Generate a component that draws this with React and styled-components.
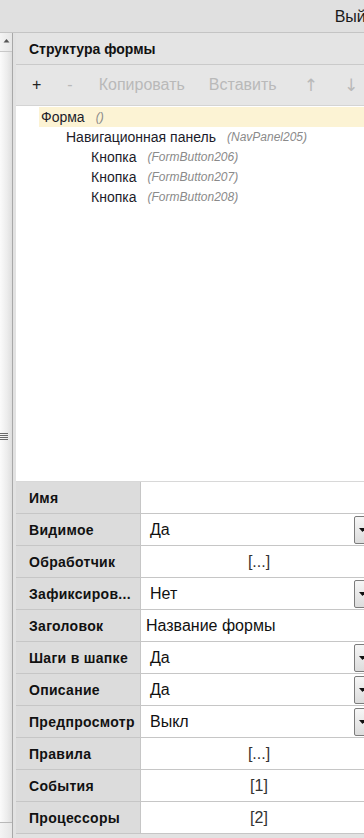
import React from "react";
import styled, { createGlobalStyle } from "styled-components";

const GlobalStyle = createGlobalStyle`
  html, body {
    margin: 0;
    padding: 0;
    overflow: hidden;
    background: #e2e2e2;
  }
  body {
    font-family: "Liberation Sans", Arial, sans-serif;
  }
`;

const treeItems = [
  { level: 0, name: "Форма", id: "()", selected: true },
  { level: 1, name: "Навигационная панель", id: "(NavPanel205)" },
  { level: 2, name: "Кнопка", id: "(FormButton206)" },
  { level: 2, name: "Кнопка", id: "(FormButton207)" },
  { level: 2, name: "Кнопка", id: "(FormButton208)" },
];

// label of the 4th row is shown shortened, as the editor does it
const props = [
  { label: "Имя", value: "" },
  { label: "Видимое", value: "Да", select: true },
  { label: "Обработчик", value: "[...]", center: true },
  { label: "Зафиксиров...", value: "Нет", select: true },
  { label: "Заголовок", value: "Название формы", plain: true },
  { label: "Шаги в шапке", value: "Да", select: true },
  { label: "Описание", value: "Да", select: true },
  { label: "Предпросмотр", value: "Выкл", select: true },
  { label: "Правила", value: "[...]", center: true },
  { label: "События", value: "[1]", center: true },
  { label: "Процессоры", value: "[2]", center: true },
];

const tools = [
  { text: "+", active: true, gap: 0 },
  { text: "-", gap: 26 },
  { text: "Копировать", gap: 26 },
  { text: "Вставить", gap: 24 },
  { text: "\u2191", gap: 27, arrow: true },
  { text: "\u2193", gap: 26, arrow: true },
];

const App = () => {
  return (
    <Frame>
      <GlobalStyle />
      <TopBar>
        <Logout>Выйти</Logout>
      </TopBar>
      <Body>
        <Splitter>
          <ArrowBox>
            <svg width="7" height="5" viewBox="0 0 7 5">
              <path d="M0.5 4.5 L3.5 1 L6.5 4.5 Z" fill="#555" />
            </svg>
          </ArrowBox>
          <Thumb>
            <Grip>
              <span />
              <span />
              <span />
              <span />
            </Grip>
          </Thumb>
        </Splitter>
        <Main>
          <Header>Структура формы</Header>
          <Toolbar>
            {tools.map((t) => (
              <ToolButton
                key={t.text}
                $active={t.active}
                $gap={t.gap}
                $arrow={t.arrow}
              >
                {t.text}
              </ToolButton>
            ))}
          </Toolbar>
          <Tree>
            {treeItems.map((item, i) => (
              <TreeRow key={i} $level={item.level} $selected={item.selected}>
                <TreeName>{item.name}</TreeName>
                <TreeId>{item.id}</TreeId>
              </TreeRow>
            ))}
          </Tree>
          <Props>
            {props.map((p) => (
              <PropRow key={p.label}>
                <PropLabel>{p.label}</PropLabel>
                <PropValue $center={p.center} $plain={p.plain}>
                  <span>{p.value}</span>
                  {p.select && (
                    <DropButton>
                      <svg width="7" height="4" viewBox="0 0 7 4">
                        <path d="M0 0 L7 0 L3.5 4 Z" fill="#111" />
                      </svg>
                    </DropButton>
                  )}
                </PropValue>
              </PropRow>
            ))}
          </Props>
          <Footer />
        </Main>
      </Body>
    </Frame>
  );
};

const Frame = styled.div`
  width: 392px;
  height: 838px;
  display: flex;
  flex-direction: column;
  background: #e2e2e2;
`;

const TopBar = styled.div`
  height: 32px;
  display: flex;
  align-items: center;
  justify-content: flex-end;
  padding-right: 10px;
  background: #e0e0e0;
  border-bottom: 1px solid #c4c4c4;
`;

const Logout = styled.span`
  font-size: 16px;
  color: #1a1a1a;
  padding-top: 1px;
`;

const Body = styled.div`
  flex: 1;
  display: flex;
  min-height: 0;
`;

const Splitter = styled.div`
  width: 12px;
  margin-right: 3px;
  display: flex;
  flex-direction: column;
  background: linear-gradient(to right, #f4f4f4, #e6e6e6);
  border-right: 1px solid #a8a8a8;
  padding-bottom: 15px;
`;

const ArrowBox = styled.div`
  height: 18px;
  display: flex;
  justify-content: center;
  align-items: flex-start;
  padding-top: 5px;
  box-sizing: border-box;
`;

const Thumb = styled.div`
  flex: 1;
  display: flex;
  align-items: center;
  border-top: 1px solid #c8c8c8;
  border-bottom: 1px solid #b8b8b8;
  background: linear-gradient(to right, #fbfbfb, #ececec 60%, #dedede);
`;

const Grip = styled.div`
  display: flex;
  flex-direction: column;
  gap: 1px;
  margin-top: -2px;

  span {
    display: block;
    width: 8px;
    height: 1px;
    background: #6a6a6a;
  }
`;

const Main = styled.div`
  width: 361px;
  display: flex;
  flex-direction: column;
`;

const Header = styled.div`
  height: 31px;
  display: flex;
  align-items: center;
  padding-left: 13px;
  font-size: 14px;
  font-weight: bold;
  color: #111;
  background: #e4e4e4;
  border-bottom: 1px solid #cacaca;
`;

const Toolbar = styled.div`
  height: 41px;
  display: flex;
  align-items: center;
  padding-left: 16px;
  background: #e6e6e6;
  border-bottom: 1px solid #d4d4d4;
  box-sizing: border-box;
`;

const ToolButton = styled.span`
  margin-left: ${(p) => p.$gap}px;
  font-family: ${(p) =>
    p.$arrow ? '"DejaVu Sans", sans-serif' : '"Liberation Sans", Arial, sans-serif'};
  font-size: ${(p) => (p.$arrow ? "17px" : "16px")};
  color: ${(p) => (p.$active ? "#222" : "#b9b9b9")};
`;

const Tree = styled.div`
  flex: 1;
  background: #ffffff;
  padding-top: 1px;
`;

const TreeRow = styled.div`
  height: 20px;
  display: flex;
  align-items: center;
  margin-left: ${(p) => 23 + p.$level * 25}px;
  padding-left: 2px;
  background: ${(p) => (p.$selected ? "#fcf3d4" : "transparent")};
`;

const TreeName = styled.span`
  font-size: 14px;
  color: #1c1c2a;
  margin-right: 11px;
`;

const TreeId = styled.span`
  font-size: 12px;
  font-style: italic;
  color: #8a8a8a;
`;

const Props = styled.div`
  display: flex;
  flex-direction: column;
  border-top: 1px solid #d8d8d8;
  background: #ffffff;
`;

const PropRow = styled.div`
  height: 31px;
  display: grid;
  grid-template-columns: 125px 1fr;
  border-bottom: 1px solid #c6c6c6;
`;

const PropLabel = styled.div`
  display: flex;
  align-items: center;
  padding-left: 13px;
  background: #dcdcdc;
  border-right: 1px solid #c6c6c6;
  font-size: 14px;
  font-weight: bold;
  letter-spacing: 0.3px;
  color: #111;
  white-space: nowrap;
`;

const PropValue = styled.div`
  display: flex;
  align-items: center;
  justify-content: ${(p) => (p.$center ? "center" : "space-between")};
  padding-left: ${(p) => (p.$center ? "0" : p.$plain ? "5px" : "9px")};
  font-size: 16px;
  color: ${(p) => (p.$center ? "#333" : "#111")};
  background: #ffffff;
  min-width: 0;
`;

const DropButton = styled.div`
  width: 17px;
  height: 28px;
  margin-right: 6px;
  box-sizing: border-box;
  display: flex;
  align-items: center;
  justify-content: center;
  border: 1px solid #7c7c7c;
  border-radius: 2px;
  background: linear-gradient(to bottom, #f6f6f6, #dcdcdc);
`;

const Footer = styled.div`
  height: 4px;
  background: #e2e2e2;
`;

export default App;
